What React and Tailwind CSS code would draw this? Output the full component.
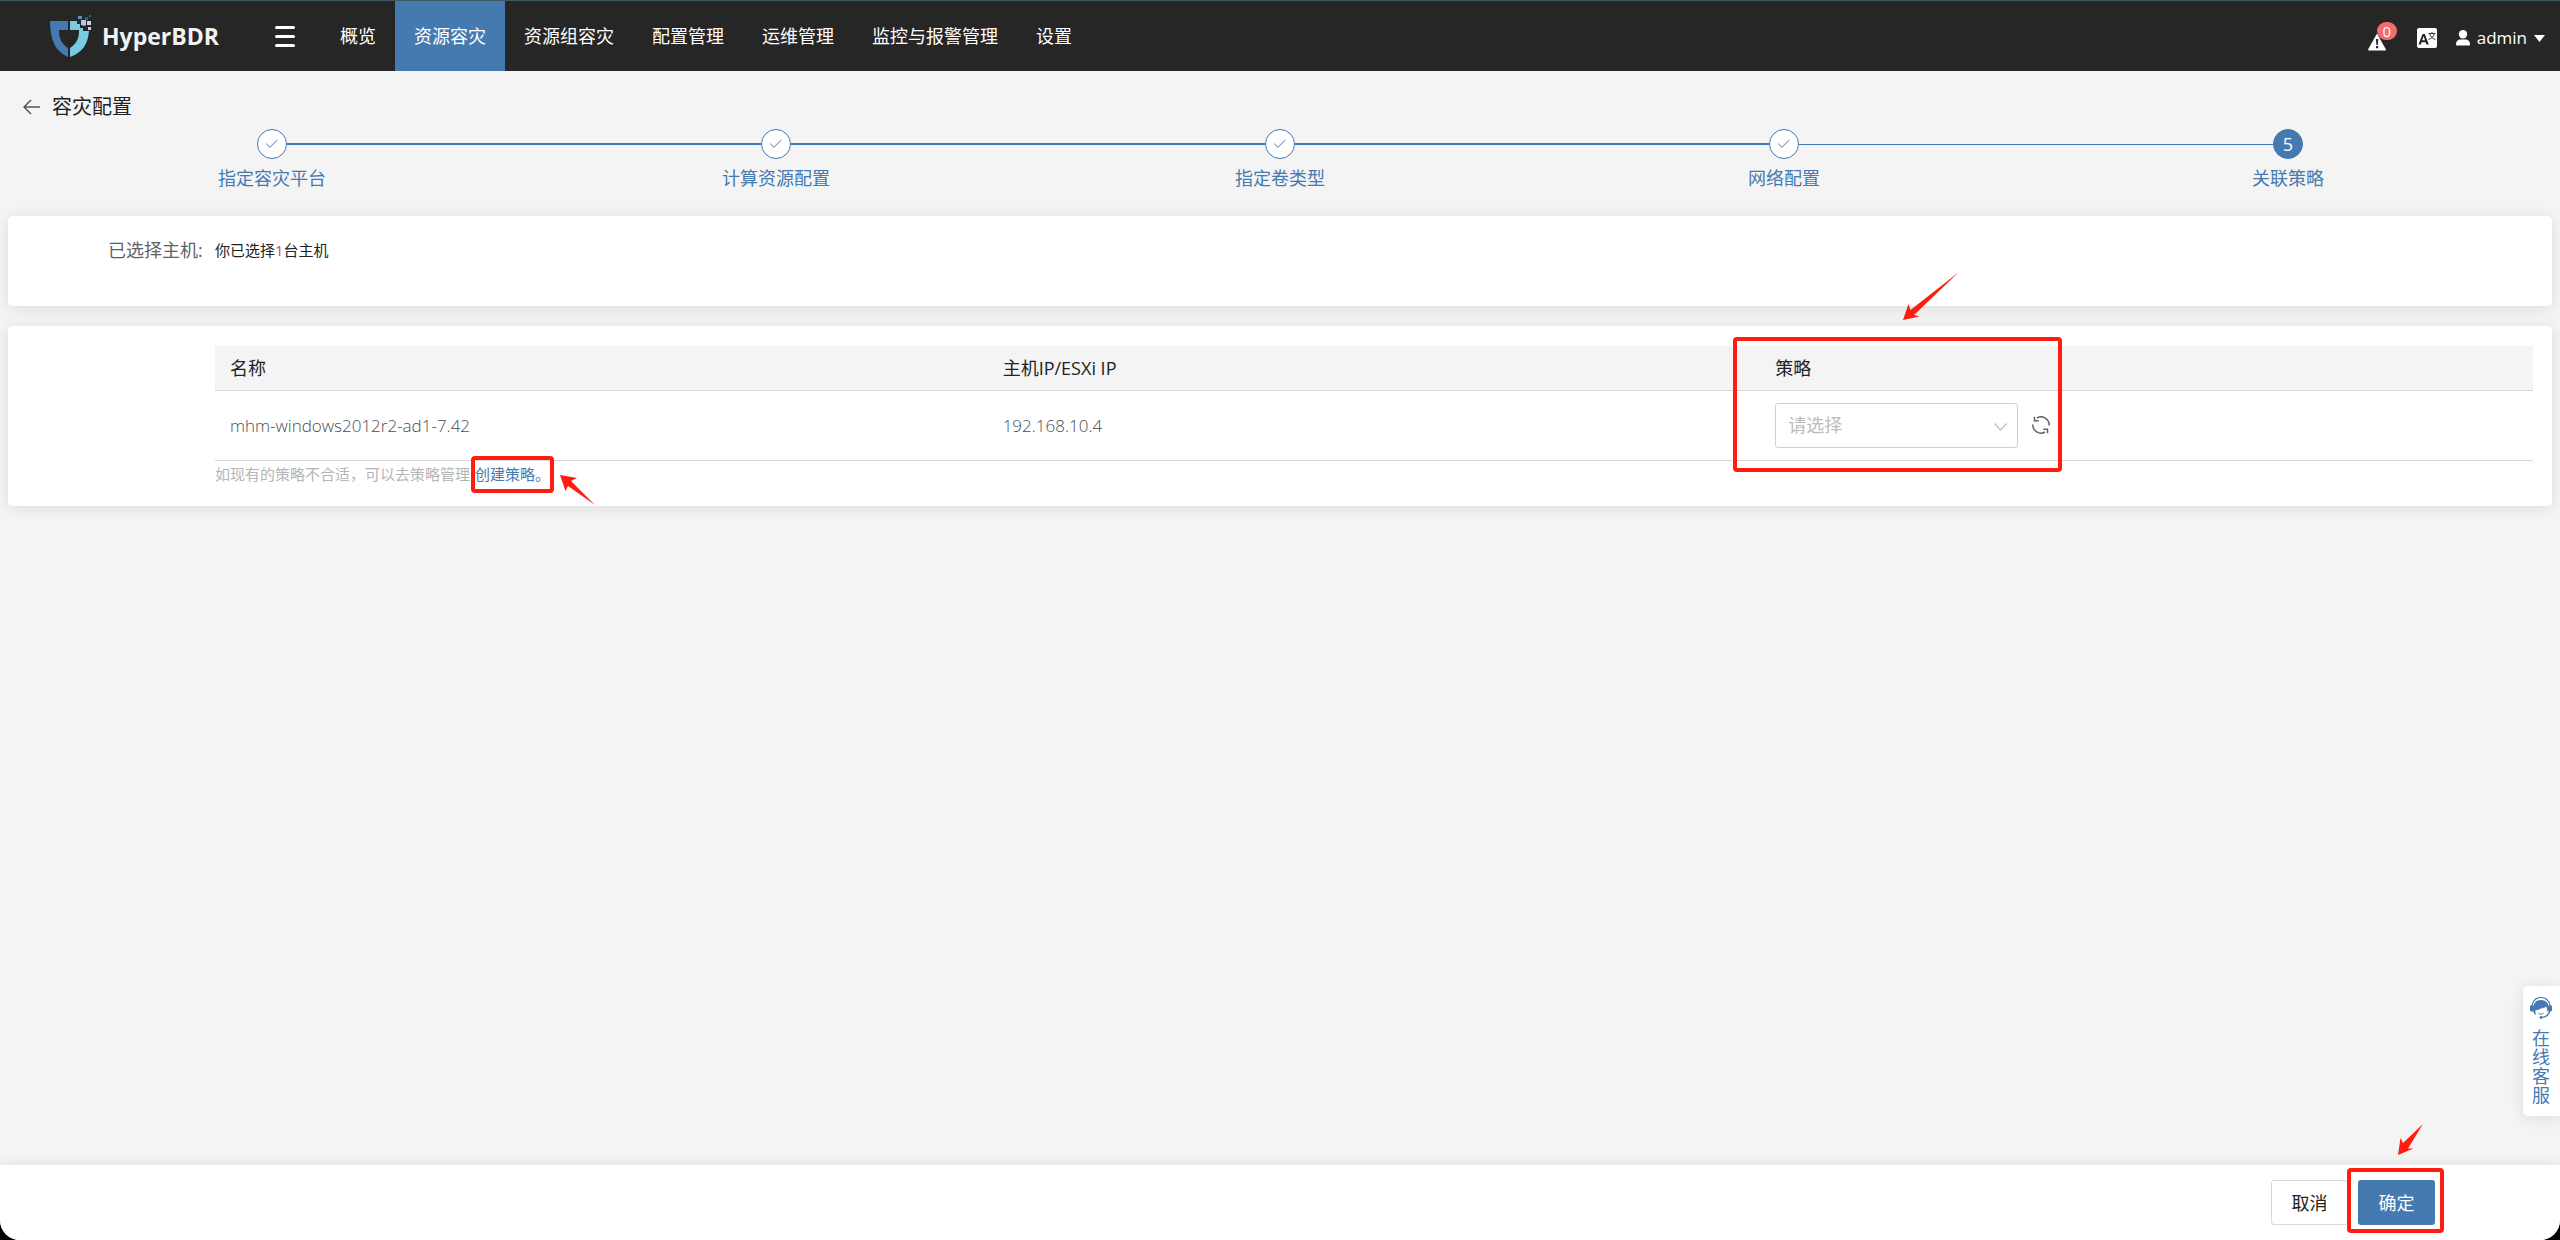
import React, { useState } from "react";
import { Check } from "lucide-react";
import clsx from "clsx";

const NAV_ITEMS = ["概览", "资源容灾", "资源组容灾", "配置管理", "运维管理", "监控与报警管理", "设置"];
const STEPS = ["指定容灾平台", "计算资源配置", "指定卷类型", "网络配置", "关联策略"];
const HOSTS = [{ id: 1, name: "mhm-windows2012r2-ad1-7.42", ip: "192.168.10.4" }];

// --- ICONS ---
const Logo = () => (
  <svg className="h-[43px] w-[42px]" viewBox="0 0 42 43">
    <path fill="#457ab1" d="M0 6h18v9h-9c0 9 3 14 9 18v9C6 37 0 26 0 6z" />
    <path fill="#79cbe3" d="M20 6h7v3h3v4h3v3h6c-1 13-7 22-19 26v-9c6-4 9-9 9-17v-1h-9z" />
    <path fill="#5b8fc4" d="M28 1h4v3h-4zM32 7h4v4h-4z" />
    <path fill="#a9cbe8" d="M31 5h5v5h-5z" />
    <path fill="#2d5c93" d="M39 0h2v2h-2zM35 2h3v3h-3z" />
    <path fill="#c7d3dc" d="M37 6h4v4h-4zM38 12h3v3h-3z" />
  </svg>
);

const AlertIcon = () => (
  <svg className="h-[18px] w-[18px]" viewBox="0 0 18 18">
    <path fill="#fff" d="M9 0.5 17.7 16c.4.8 0 1.500-.8 1.500H1.100c-.8 0-1.200-.7-.8-1.500z" />
    <path fill="#262626" d="M7.900 6h2.400l-.5 6H8.400zM8 13h2.200v2.200H8z" />
  </svg>
);

const LanguageIcon = () => (
  <svg className="h-[20px] w-[20px]" viewBox="0 0 20 20">
    <rect width="20" height="20" rx="2" fill="#fff" />
    <path fill="#262626" fillRule="evenodd" d="M1.500 16.500 5.500 6h2.300l4 10.500H9.400l-.8-2.300H4.600l-.8 2.300zM5.200 12.300h2.800L6.600 8.200z" />
    <path fill="none" stroke="#262626" strokeWidth="0.900" d="M11.500 5.500h7M15 4v1.500M12.800 6c.8 2.500 2.500 4.500 5.700 5.500M17.200 6c-.8 2.500-2.500 4.500-5.700 5.500" />
  </svg>
);

const UserIcon = () => (
  <svg className="h-[16px] w-[14px]" viewBox="0 0 14 16">
    <circle cx="7" cy="4.200" r="4.200" fill="#fff" />
    <path fill="#fff" d="M0 14.500C0 11 2 9.500 4.500 9.500h5C12 9.500 14 11 14 14.500c0 .7-.4 1-1 1H1c-.6 0-1-.3-1-1z" />
  </svg>
);

const RefreshIcon = () => (
  <svg className="h-[18px] w-[18px]" viewBox="0 0 18 18" fill="none" stroke="#606266" strokeWidth="1.500">
    <path d="M5 2a8.200 8.200 0 0 1 12.200 7.500M.8 8.500A8.200 8.200 0 0 0 13 16" />
    <path d="M2.500 .8v3.900h4.200M15.500 17.200v-3.900h-4.200" />
  </svg>
);

const ServiceIcon = () => (
  <svg className="h-[22px] w-[22px]" viewBox="0 0 22 22">
    <path fill="none" stroke="#457ab1" strokeWidth="1.200" d="M2 9a9 8.500 0 0 1 18 0M19.800 14c-1 3.800-4 6.200-8 6.500" />
    <rect x="0" y="8" width="3.500" height="6.500" rx="1.500" fill="#457ab1" />
    <rect x="18.500" y="8" width="3.500" height="6.500" rx="1.500" fill="#457ab1" />
    <path fill="#457ab1" d="M3.200 14.500C2 7.500 5.500 3 11 3s9 4.500 7.800 11.500h-1.500c0-2-.3-3.500-1.300-5-1 1-2.200 1.500-3.500 2l.5-1.200c-2 1.700-4.300 2.700-7.500 3-.3 1.500 0 3.200.8 4.700-1.500-.5-2.500-1.700-3.100-3.500z" />
    <path fill="none" stroke="#457ab1" strokeWidth="1" d="M8.500 16.300c1.500 1.200 3.500 1.200 5 0" />
    <circle cx="11" cy="20.500" r="1.400" fill="#457ab1" />
  </svg>
);

// --- GUIDE MARKS ---
const Mark = ({ className }) => (
  <span className={clsx("pointer-events-none absolute z-10 rounded-[4px] border-4 border-[#ff1d12]", className)} />
);

const Arrow = ({ className, viewBox, points }) => (
  <svg className={clsx("pointer-events-none absolute z-10", className)} viewBox={viewBox}>
    <polygon points={points} fill="#ff1d12" />
  </svg>
);

const Card = ({ className, children }) => (
  <section className={clsx("mx-2 rounded-[5px] bg-white shadow-[0_2px_15px_rgba(0,0,0,0.1)]", className)}>{children}</section>
);

function Header() {
  return (
    <header className="flex h-[71px] items-stretch border-t border-[#42565e] bg-[#262626] text-white">
      <a href="#home" className="flex w-[225px] items-center gap-[10px] pl-[50px]">
        <Logo />
        <span className="text-[23px] font-bold text-[#f2f2f2]">HyperBDR</span>
      </a>
      <button type="button" aria-label="菜单" className="ml-[50px] flex flex-col justify-center gap-[6px]">
        <span className="h-[3px] w-5 rounded-full bg-white" />
        <span className="h-[3px] w-5 rounded-full bg-white" />
        <span className="h-[3px] w-5 rounded-full bg-white" />
      </button>
      <nav className="ml-[26px] flex">
        {NAV_ITEMS.map((item) => (
          <a
            key={item}
            href="#nav"
            className={clsx("flex items-center px-[19px]", item === "资源容灾" && "bg-[#457ab1]")}
          >
            {item}
          </a>
        ))}
      </nav>
      <div className="ml-auto flex items-center pt-1 pr-[15px]">
        <button type="button" aria-label="告警" className="relative mr-[31px] pt-[7px]">
          <AlertIcon />
          <span className="absolute -top-[4px] left-[9px] h-[18px] w-[20px] rounded-full bg-[#f56c6c] text-center text-[15px] leading-[18px]">0</span>
        </button>
        <button type="button" aria-label="语言" className="mr-[19px]">
          <LanguageIcon />
        </button>
        <button type="button" className="flex items-center gap-[7px] text-[17px]">
          <UserIcon />
          admin
          <svg className="h-[7px] w-[11px]" viewBox="0 0 11 7"><path fill="#fff" d="M0 0h11L5.500 7z" /></svg>
        </button>
      </div>
    </header>
  );
}

function Steps() {
  const last = STEPS.length - 1;
  return (
    <ol className="mx-5 flex text-[#457ab1]">
      {STEPS.map((step, i) => (
        <li key={step} className="flex-1">
          <div className="flex items-center">
            <span className={clsx("flex-1", i > 0 && "bg-[#457ab1]", i === last ? "h-px" : "h-[2px]")} />
            <span
              className={clsx(
                "flex size-[30px] items-center justify-center rounded-full border border-[#457ab1]",
                i === last ? "bg-[#457ab1] text-white" : "bg-white"
              )}
            >
              {i === last ? i + 1 : <Check size={16} strokeWidth={1.5} />}
            </span>
            <span className={clsx("flex-1", i < last && "bg-[#457ab1]", i === last - 1 ? "h-px" : "h-[2px]")} />
          </div>
          <p className="mt-1.5 text-center">{step}</p>
        </li>
      ))}
    </ol>
  );
}

export default function App() {
  const [policy, setPolicy] = useState("");

  return (
    <div className="bg-black font-['Open_Sans','Noto_Sans_CJK_SC',sans-serif] text-[18px] leading-[26px] font-normal text-[#222222]">
      <div className="flex min-h-screen flex-col overflow-hidden rounded-b-[20px] bg-[#f4f4f4]">
        <Header />

        <main className="relative flex-1">
          <div className="flex items-center gap-3 pt-[23px] pl-[23px]">
            <button type="button" aria-label="返回">
              <svg className="h-[16px] w-[17px]" viewBox="0 0 17 16" fill="none" stroke="#555" strokeWidth="1.500">
                <path d="M17 8H1M8 1 1 8l7 7" />
              </svg>
            </button>
            <h1 className="text-xl leading-[26px]">容灾配置</h1>
          </div>

          <div className="mt-[9px]">
            <Steps />
          </div>

          <Card className="mt-[25px] flex h-[90px] items-start pt-[21px] pl-[100px]">
            <span className="w-[107px] text-[#606266]">已选择主机:</span>
            <p className="text-[15px]">
              你已选择<span className="text-[#c0504d]">1</span>台主机
            </p>
          </Card>

          <Card className="mt-5 pt-5 pr-[19px] pb-[19px] pl-[207px]">
            <table className="w-full table-fixed border-collapse text-left">
              <thead>
                <tr className="h-11 border-b border-[#d8d8d8] bg-[#f4f4f4]">
                  <th className="px-[15px] font-normal">名称</th>
                  <th className="px-[15px] font-normal">主机IP/ESXi IP</th>
                  <th className="px-[15px] font-normal">策略</th>
                </tr>
              </thead>
              <tbody>
                {HOSTS.map((host) => (
                  <tr key={host.id} className="h-[70px] border-b border-[#d8d8d8] text-[#4a4c50]">
                    <td className="px-[15px] pt-0.5 text-[17px] font-light">{host.name}</td>
                    <td className="px-[15px] pt-0.5 text-[17px] font-light">{host.ip}</td>
                    <td className="px-[15px]">
                      <div className="relative flex items-center gap-[14px]">
                        <div className="relative">
                          <select
                            aria-label="策略"
                            value={policy}
                            onChange={(e) => setPolicy(e.target.value)}
                            className="block h-[45px] w-[243px] appearance-none rounded-[3px] border border-[#cfcfcf] bg-white pl-[12px] text-[#bcbcbc]"
                          >
                            <option value="">请选择</option>
                          </select>
                          <svg className="pointer-events-none absolute top-[20px] right-[11px] h-[8px] w-[13px]" viewBox="0 0 13 8" fill="none" stroke="#c0c4cc" strokeWidth="1.500">
                            <path d="m.5 .5 6 6.500 6-6.500" />
                          </svg>
                        </div>
                        <button type="button" aria-label="刷新">
                          <RefreshIcon />
                        </button>
                        <Mark className="-top-[66px] -left-[42px] h-[135px] w-[329px]" />
                        <Arrow
                          className="-top-[131px] left-[128px] h-[48px] w-[56px]"
                          viewBox="0 0 56 48"
                          points="0,48 5.5,32 7.5,38 56,0 11,43 16.5,44.5"
                        />
                      </div>
                    </td>
                  </tr>
                ))}
              </tbody>
            </table>
            <p className="flex gap-[5px] text-[15px] text-[#b5b5b5]">
              如现有的策略不合适，可以去策略管理
              <a href="#policy" className="relative text-[#457ab1]">
                创建策略。
                <Mark className="-top-[5px] -left-[4px] h-[37px] w-[83px]" />
                <Arrow
                  className="top-[14px] left-[85px] h-[30px] w-[35px]"
                  viewBox="0 0 35 30"
                  points="0,0 17,3 11,6 35,30 8,11 5.5,16"
                />
              </a>
            </p>
          </Card>

          <button
            type="button"
            className="absolute right-0 bottom-[49px] flex h-[130px] w-[37px] flex-col items-center rounded-l-[5px] bg-white pt-[11px] pr-px leading-[19px] text-[#457ab1] shadow-[0_2px_15px_rgba(0,0,0,0.1)]"
          >
            <ServiceIcon />
            <span className="mt-[10px] w-[18px]">在线客服</span>
          </button>
        </main>

        <footer className="flex h-[75px] justify-end gap-[10px] bg-white pt-[15px] pr-[125px] shadow-[0_2px_15px_rgba(0,0,0,0.12)]">
          <button type="button" className="h-[45px] w-[77px] rounded-[3px] border border-[#d8d8d8] bg-white">
            取消
          </button>
          <button type="button" className="relative h-[45px] w-[77px] rounded-[3px] bg-[#457ab1] text-white">
            确定
            <Mark className="-top-[12px] -left-[11px] h-[65px] w-[97px]" />
            <Arrow
              className="-top-[56px] left-[40px] h-[31px] w-[25px]"
              viewBox="0 0 25 31"
              points="0,31 2.5,14 5,19 25,0 10,24.5 15.5,24.5"
            />
          </button>
        </footer>
      </div>
    </div>
  );
}
